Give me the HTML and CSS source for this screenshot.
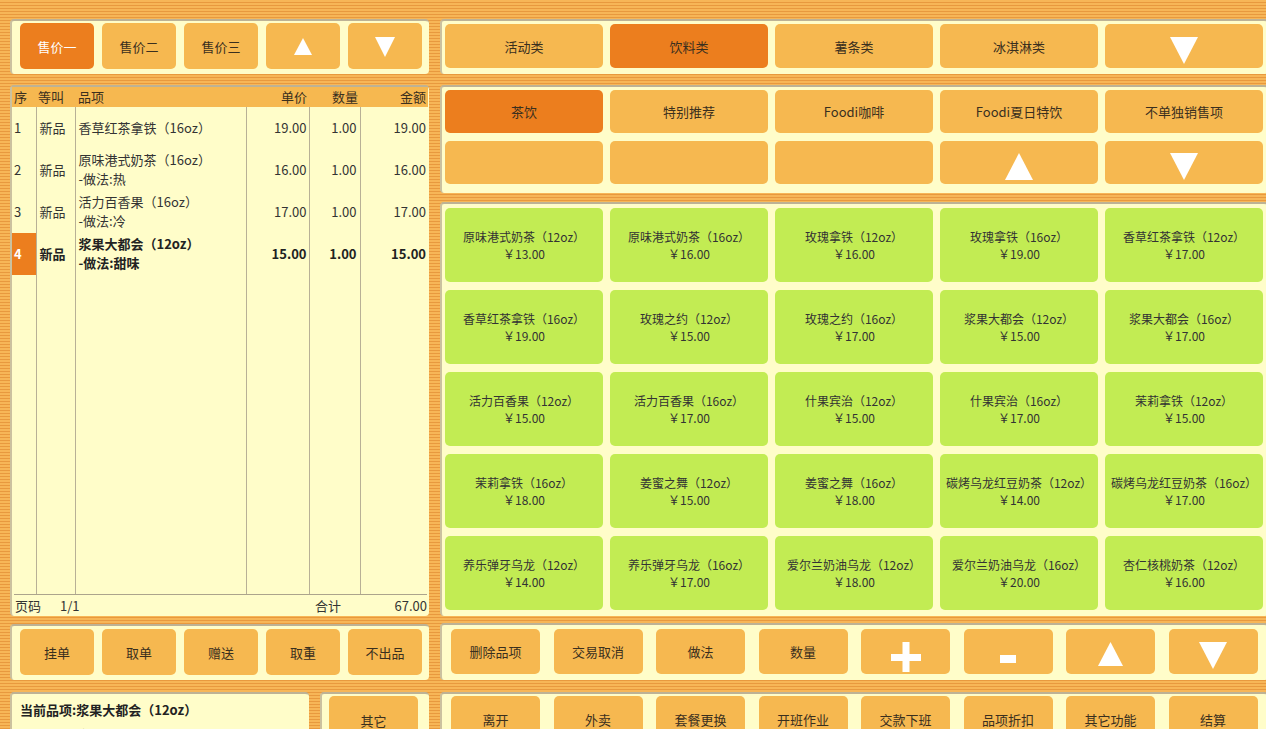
FILE: index.html
```html
<!DOCTYPE html>
<html lang="zh-CN">
<head>
<meta charset="utf-8">
<title>POS</title>
<link rel="stylesheet" href="styles.css">
</head>
<body>
<div class="pos">
  <div class="col-left">
    <div class="panel bar-price">
      <div class="btn on">售价一</div>
      <div class="btn">售价二</div>
      <div class="btn">售价三</div>
      <div class="btn"><svg class="ico up-s" viewBox="0 0 18 17"><polygon points="9,0 18,17 0,17"/></svg></div>
      <div class="btn"><svg class="ico dn-s" viewBox="0 0 20 20"><polygon points="0,0 20,0 10,20"/></svg></div>
    </div>
    <div class="panel order">
      <table class="order-table">
        <colgroup><col class="c1"><col class="c2"><col class="c3"><col class="c4"><col class="c5"><col class="c6"></colgroup>
        <thead>
          <tr><th class="pl2">序</th><th class="pl2">等叫</th><th class="pl3">品项</th><th class="num">单价</th><th class="num">数量</th><th class="num">金额</th></tr>
        </thead>
        <tbody>
          <tr class="row"><td class="seq">1</td><td>新品</td><td>香草红茶拿铁（16oz）</td><td class="num">19.00</td><td class="num">1.00</td><td class="num">19.00</td></tr>
          <tr class="row"><td class="seq">2</td><td>新品</td><td>原味港式奶茶（16oz）<br>-做法:热</td><td class="num">16.00</td><td class="num">1.00</td><td class="num">16.00</td></tr>
          <tr class="row"><td class="seq">3</td><td>新品</td><td>活力百香果（16oz）<br>-做法:冷</td><td class="num">17.00</td><td class="num">1.00</td><td class="num">17.00</td></tr>
          <tr class="row sel"><td class="seq">4</td><td>新品</td><td>浆果大都会（12oz）<br>-做法:甜味</td><td class="num">15.00</td><td class="num">1.00</td><td class="num">15.00</td></tr>
          <tr class="filler"><td></td><td></td><td></td><td></td><td></td><td></td></tr>
        </tbody>
      </table>
      <div class="order-foot">
        <span class="pg-label">页码</span><span>1/1</span>
        <span class="sum-label">合计</span><span class="sum-val">67.00</span>
      </div>
    </div>
    <div class="panel bar-act">
      <div class="btn">挂单</div>
      <div class="btn">取单</div>
      <div class="btn">赠送</div>
      <div class="btn">取重</div>
      <div class="btn">不出品</div>
    </div>
    <div class="info-row">
      <div class="panel info">
        <div class="info-title">当前品项:浆果大都会（12oz）</div>
        <div class="info-line">点单-顾收宾(0001)&nbsp; 2020-06-27 20:30:30</div>
      </div>
      <div class="panel other">
        <div class="btn">其它</div>
      </div>
    </div>
  </div>

  <div class="col-right">
    <div class="panel bar-cat">
      <div class="btn">活动类</div>
      <div class="btn on">饮料类</div>
      <div class="btn">薯条类</div>
      <div class="btn">冰淇淋类</div>
      <div class="btn"><svg class="ico tri-l" viewBox="0 0 28 27"><polygon points="0,0 28,0 14,27"/></svg></div>
    </div>
    <div class="panel subcat">
      <div class="btn on">茶饮</div>
      <div class="btn">特别推荐</div>
      <div class="btn">Foodi咖啡</div>
      <div class="btn">Foodi夏日特饮</div>
      <div class="btn">不单独销售项</div>
      <div class="btn"></div>
      <div class="btn"></div>
      <div class="btn"></div>
      <div class="btn"><svg class="ico tri-l" viewBox="0 0 28 27"><polygon points="14,0 28,27 0,27"/></svg></div>
      <div class="btn"><svg class="ico tri-l" viewBox="0 0 28 27"><polygon points="0,0 28,0 14,27"/></svg></div>
    </div>
    <div class="panel products">
      <div class="card"><span>原味港式奶茶（12oz）</span><span>￥13.00</span></div>
      <div class="card"><span>原味港式奶茶（16oz）</span><span>￥16.00</span></div>
      <div class="card"><span>玫瑰拿铁（12oz）</span><span>￥16.00</span></div>
      <div class="card"><span>玫瑰拿铁（16oz）</span><span>￥19.00</span></div>
      <div class="card"><span>香草红茶拿铁（12oz）</span><span>￥17.00</span></div>

      <div class="card"><span>香草红茶拿铁（16oz）</span><span>￥19.00</span></div>
      <div class="card"><span>玫瑰之约（12oz）</span><span>￥15.00</span></div>
      <div class="card"><span>玫瑰之约（16oz）</span><span>￥17.00</span></div>
      <div class="card"><span>浆果大都会（12oz）</span><span>￥15.00</span></div>
      <div class="card"><span>浆果大都会（16oz）</span><span>￥17.00</span></div>

      <div class="card"><span>活力百香果（12oz）</span><span>￥15.00</span></div>
      <div class="card"><span>活力百香果（16oz）</span><span>￥17.00</span></div>
      <div class="card"><span>什果宾治（12oz）</span><span>￥15.00</span></div>
      <div class="card"><span>什果宾治（16oz）</span><span>￥17.00</span></div>
      <div class="card"><span>茉莉拿铁（12oz）</span><span>￥15.00</span></div>

      <div class="card"><span>茉莉拿铁（16oz）</span><span>￥18.00</span></div>
      <div class="card"><span>姜蜜之舞（12oz）</span><span>￥15.00</span></div>
      <div class="card"><span>姜蜜之舞（16oz）</span><span>￥18.00</span></div>
      <div class="card"><span>碳烤乌龙红豆奶茶（12oz）</span><span>￥14.00</span></div>
      <div class="card"><span>碳烤乌龙红豆奶茶（16oz）</span><span>￥17.00</span></div>

      <div class="card"><span>养乐弹牙乌龙（12oz）</span><span>￥14.00</span></div>
      <div class="card"><span>养乐弹牙乌龙（16oz）</span><span>￥17.00</span></div>
      <div class="card"><span>爱尔兰奶油乌龙（12oz）</span><span>￥18.00</span></div>
      <div class="card"><span>爱尔兰奶油乌龙（16oz）</span><span>￥20.00</span></div>
      <div class="card"><span>杏仁核桃奶茶（12oz）</span><span>￥16.00</span></div>
    </div>
    <div class="panel bar-ops">
      <div class="btn">删除品项</div>
      <div class="btn">交易取消</div>
      <div class="btn">做法</div>
      <div class="btn">数量</div>
      <div class="btn"><svg class="ico plus" viewBox="0 0 30 30"><rect x="0" y="12" width="30" height="7"/><rect x="11.5" y="0" width="7" height="30"/></svg></div>
      <div class="btn"><svg class="ico minus" viewBox="0 0 16 8"><rect x="0" y="0" width="16" height="8"/></svg></div>
      <div class="btn"><svg class="ico up-m" viewBox="0 0 25 24"><polygon points="12.5,0 25,24 0,24"/></svg></div>
      <div class="btn"><svg class="ico tri-l" viewBox="0 0 28 27"><polygon points="0,0 28,0 14,27"/></svg></div>
    </div>
    <div class="panel bar-sys">
      <div class="btn">离开</div>
      <div class="btn">外卖</div>
      <div class="btn">套餐更换</div>
      <div class="btn">开班作业</div>
      <div class="btn">交款下班</div>
      <div class="btn">品项折扣</div>
      <div class="btn">其它功能</div>
      <div class="btn">结算</div>
    </div>
  </div>
</div>
</body>
</html>
```

FILE: styles.css
```css
* { box-sizing: border-box; }

html, body {
  margin: 0;
  width: 1266px;
  height: 729px;
  overflow: hidden;
}

body {
  font-family: "Noto Sans CJK SC", "Noto Sans", sans-serif;
  font-size: 13px;
  color: #333;
  background: repeating-linear-gradient(to bottom, #f7b657 0, #f7b657 2px, #e8993e 2px, #e8993e 3px);
}

.pos {
  display: flex;
  gap: 11px;
  padding: 19px 0 0 10px;
}

.col-left {
  width: 419px;
  flex: none;
  display: flex;
  flex-direction: column;
}

.col-right {
  width: 828px;
  flex: none;
  display: flex;
  flex-direction: column;
}

.panel {
  background: #fffdc9;
  border-radius: 4px;
  border-top: 2px solid #bdb295;
  border-left: 2px solid #cbc19f;
}

.btn {
  background: #f6b850;
  border-radius: 5px;
  display: flex;
  align-items: center;
  justify-content: center;
  color: #3a2f1e;
  font-size: 13px;
  line-height: 1;
  white-space: nowrap;
}

.btn.on {
  background: #ec7e1e;
}

.ico {
  fill: #fff;
  display: block;
}

.up-s { width: 18px; height: 17px; }
.dn-s { width: 20px; height: 20px; margin-top: 2px; }
.tri-l { width: 28px; height: 27px; margin-top: 8px; }
.up-m { width: 25px; height: 24px; margin-top: 5px; }
.plus { width: 30px; height: 30px; margin-top: 11px; }
.minus { width: 16px; height: 8px; margin-top: 15px; }

/* ---------- left column ---------- */
.bar-price {
  height: 55px;
  display: flex;
  justify-content: space-between;
  padding: 2px 7px 0 8px;
}

.bar-price .btn {
  width: 74px;
  height: 46px;
}

.bar-price .btn.on {
  color: #fff;
}

.order {
  margin-top: 11px;
  height: 531px;
  padding-right: 1px;
}

.order-table {
  width: 100%;
  border-collapse: collapse;
  table-layout: fixed;
  font-size: 13px;
  line-height: 19px;
  color: #333;
}

.c1 { width: 24px; }
.c2 { width: 39px; }
.c3 { width: 171px; }
.c4 { width: 63px; }
.c5 { width: 51px; }

.order-table th {
  background: #f6b850;
  height: 19px;
  padding: 0 0 1px 0;
  font-weight: normal;
  text-align: left;
  color: #3a2f1e;
}

.order-table th.pl2 { padding-left: 2px; }
.order-table th.pl3 { padding-left: 3px; }
.order-table th.num { text-align: right; padding-right: 2px; }

.order-table td {
  padding: 0 0 2px 3px;
  vertical-align: middle;
  white-space: nowrap;
  overflow: hidden;
}

.order-table td + td {
  border-left: 1px solid #b8b096;
}

.order-table td.seq { padding-left: 2px; }
.order-table td.num { text-align: right; padding-right: 2px; }
.order-table td.num:nth-child(5) { padding-right: 3px; }

.row { height: 42px; }
.filler { height: 319px; }

.sel td { font-weight: bold; color: #222; }
.sel td.seq { background: #ec7e1e; color: #fff; }

.order-foot {
  display: flex;
  align-items: center;
  height: 22px;
  margin: 0 1px 0 2px;
  border-top: 1px solid #aca48c;
  padding: 0 0 1px 1px;
  color: #333;
}

.pg-label { width: 45px; }
.sum-label { margin-left: auto; }
.sum-val { width: 86px; text-align: right; }

.bar-act {
  margin-top: 8px;
  height: 56px;
  display: flex;
  justify-content: space-between;
  padding: 3px 7px 0 8px;
}

.bar-act .btn {
  width: 74px;
  height: 46px;
}

.info-row {
  margin-top: 12px;
  display: flex;
  gap: 11px;
  height: 60px;
}

.info {
  width: 299px;
  padding: 6px 8px 0 8px;
  line-height: 19px;
  color: #222;
}

.info-title { font-weight: bold; }
.info-line { font-weight: bold; white-space: nowrap; margin-top: 6px; }

.other {
  width: 109px;
  padding: 2px 0 0 7px;
}

.other .btn {
  width: 89px;
  height: 46px;
  padding-top: 2px;
}

/* ---------- right column ---------- */
.bar-cat {
  height: 55px;
  display: flex;
  gap: 7px;
  padding: 3px 0 0 3px;
}

.bar-cat .btn {
  width: 158px;
  height: 44px;
}

.subcat {
  margin-top: 11px;
  height: 108px;
  display: grid;
  grid-template-columns: repeat(5, 158px);
  grid-template-rows: 43px 43px;
  gap: 8px 7px;
  padding: 3px 0 0 3px;
}

.products {
  margin-top: 9px;
  height: 414px;
  display: grid;
  grid-template-columns: repeat(5, 158px);
  grid-template-rows: repeat(5, 74px);
  gap: 8px 7px;
  padding: 4px 0 0 3px;
}

.card {
  background: #c2ec53;
  border-radius: 5px;
  display: flex;
  flex-direction: column;
  align-items: center;
  justify-content: center;
  font-size: 12px;
  line-height: 17px;
  color: #333;
  white-space: nowrap;
}

.bar-ops {
  margin-top: 7px;
  height: 57px;
  display: flex;
  gap: 13.5px;
  padding: 4px 0 0 9px;
}

.bar-ops .btn {
  width: 89px;
  height: 45px;
}

.bar-sys {
  margin-top: 12px;
  height: 60px;
  display: flex;
  gap: 13.5px;
  padding: 2px 0 0 9px;
}

.bar-sys .btn {
  width: 89px;
  height: 46px;
}
```
